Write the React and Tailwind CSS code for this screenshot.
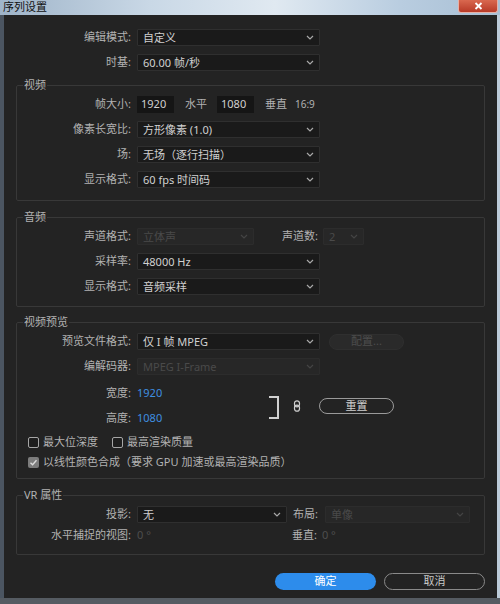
import React from "react";

const Chevron = ({ dim }) => (
  <svg width="8" height="5" viewBox="0 0 8 5" className="shrink-0">
    <path d="M1 1 L4 4 L7 1" fill="none" stroke={dim ? "#444" : "#a8a8a8"} strokeWidth="1.2" />
  </svg>
);

const Select = ({ value, w = "w-[183px]", disabled }) => (
  <div
    className={`${w} h-[17px] flex items-center justify-between pl-[5px] pr-[5px] border rounded-[1px] ${
      disabled ? "bg-[#272727] border-[#2c2c2c] text-[#4a4a4a]" : "bg-[#1a1a1a] border-[#2f2f2f] text-[#d0d0d0]"
    }`}
  >
    <span className="leading-none whitespace-nowrap">{value}</span>
    <Chevron dim={disabled} />
  </div>
);

const Row = ({ label, w = "w-[127px]", h = "h-[25px]", children }) => (
  <div className={`flex items-center ${h}`}>
    <span className={`${w} text-right text-[#b2b2b2] whitespace-nowrap`}>{label}</span>
    <div className="ml-[6px] flex items-center">{children}</div>
  </div>
);

const Group = ({ title, className = "", children }) => (
  <fieldset className={`mx-[12px] border border-[#383838] rounded-[2px] ${className}`}>
    <legend className="ml-[6px] px-[1px] leading-[14px] text-[#b2b2b2]">{title}</legend>
    {children}
  </fieldset>
);

const Box = ({ checked }) =>
  checked ? (
    <div className="w-[11px] h-[11px] rounded-[2px] bg-[#7c7c7c] flex items-center justify-center">
      <svg width="9" height="9" viewBox="0 0 9 9">
        <path d="M1.5 4.8 L3.6 6.8 L7.5 2.2" fill="none" stroke="#dcdcdc" strokeWidth="1.4" />
      </svg>
    </div>
  ) : (
    <div className="w-[11px] h-[11px] rounded-[2px] border border-[#a6a6a6] bg-[#1e1e1e]" />
  );

const LinkIcon = () => (
  <svg width="8" height="12" viewBox="0 0 8 12">
    <rect x="1.5" y="0.8" width="5" height="6" rx="2.5" fill="none" stroke="#d0d0d0" strokeWidth="1.2" />
    <rect x="1.5" y="5.2" width="5" height="6" rx="2.5" fill="none" stroke="#d0d0d0" strokeWidth="1.2" />
  </svg>
);

export default function App() {
  return (
    <div className="w-[500px] h-[604px] flex flex-col overflow-hidden text-[11px] font-['Noto_Sans','Noto_Sans_CJK_SC',sans-serif] bg-[#4b5561]">
      {/* title bar */}
      <div className="h-[15px] shrink-0 flex items-start justify-between bg-[linear-gradient(90deg,#9fb4c9,#c9d8e6_30%,#e0e9f1_55%,#b9cde0_80%,#a8bfd4)]">
        <span className="pl-[3px] leading-[14px] text-[#111]">序列设置</span>
        <div className="w-[40px] h-[13px] mr-[2px] rounded-b-[3px] border border-t-0 border-[#e6b0a6] bg-[linear-gradient(180deg,#d9684f,#b83a27)] flex items-center justify-center">
          <svg width="9" height="8" viewBox="0 0 9 8">
            <path d="M1.5 1 L7.5 7 M7.5 1 L1.5 7" stroke="#fff" strokeWidth="1.8" />
          </svg>
        </div>
      </div>

      <div className="flex-1 flex min-h-0">
        <div className="w-[4px] bg-[#4b5561]" />
        <div className="flex-1 bg-[#232323] flex flex-col pt-[10px]">
          <Row label="编辑模式:">
            <Select value="自定义" />
          </Row>
          <Row label="时基:">
            <Select value="60.00 帧/秒" />
          </Row>

          {/* video */}
          <Group title="视频" className="mt-[3px] pb-[8px]">
            <Row label="帧大小:" w="w-[114px]">
              <div className="w-[37px] h-[17px] bg-[#151515] text-[#d0d0d0] pl-[4px] flex items-center">1920</div>
              <span className="ml-[11px] text-[#b2b2b2]">水平</span>
              <div className="ml-[10px] w-[37px] h-[17px] bg-[#151515] text-[#d0d0d0] pl-[4px] flex items-center">1080</div>
              <span className="ml-[11px] text-[#b2b2b2]">垂直</span>
              <span className="ml-[8px] text-[#b2b2b2] text-[10px]">16:9</span>
            </Row>
            <Row label="像素长宽比:" w="w-[114px]">
              <Select value="方形像素 (1.0)" />
            </Row>
            <Row label="场:" w="w-[114px]">
              <Select value="无场（逐行扫描）" />
            </Row>
            <Row label="显示格式:" w="w-[114px]">
              <Select value="60 fps 时间码" />
            </Row>
          </Group>

          {/* audio */}
          <Group title="音频" className="mt-[9px] pb-[7px]">
            <Row label="声道格式:" w="w-[114px]">
              <Select value="立体声" w="w-[117px]" disabled />
              <span className="ml-[28px] text-[#b2b2b2]">声道数:</span>
              <div className="ml-[5px]">
                <Select value="2" w="w-[41px]" disabled />
              </div>
            </Row>
            <Row label="采样率:" w="w-[114px]">
              <Select value="48000 Hz" />
            </Row>
            <Row label="显示格式:" w="w-[114px]">
              <Select value="音频采样" />
            </Row>
          </Group>

          {/* preview */}
          <Group title="视频预览" className="mt-[8px] pb-[6px]">
            <Row label="预览文件格式:" w="w-[114px]">
              <Select value="仅 I 帧 MPEG" />
              <div className="ml-[9px] w-[75px] h-[16px] rounded-full bg-[#2a2a2a] border border-[#2f2f2f] text-[#4d4d4d] flex items-center justify-center">
                配置...
              </div>
            </Row>
            <Row label="编解码器:" w="w-[114px]">
              <Select value="MPEG I-Frame" disabled />
            </Row>
            <div className="flex items-center mt-[2px]">
              <div className="w-[252px]">
                <Row label="宽度:" w="w-[114px]">
                  <span className="text-[#3f8fe0]">1920</span>
                </Row>
                <Row label="高度:" w="w-[114px]">
                  <span className="text-[#3f8fe0]">1080</span>
                </Row>
              </div>
              <div className="w-[10px] h-[23px] mt-[3px] border-t-2 border-r-2 border-b-2 border-[#d0d0d0]" />
              <div className="ml-[14px]">
                <LinkIcon />
              </div>
              <div className="ml-[18px] w-[75px] h-[16px] rounded-full border border-[#9a9a9a] text-[#d0d0d0] flex items-center justify-center">
                重置
              </div>
            </div>
            <div className="flex items-center h-[20px] mt-[1px] pl-[11px] text-[#b2b2b2]">
              <Box />
              <span className="ml-[4px]">最大位深度</span>
              <div className="ml-[14px]">
                <Box />
              </div>
              <span className="ml-[4px]">最高渲染质量</span>
            </div>
            <div className="flex items-center h-[20px] pl-[11px] text-[#b2b2b2]">
              <Box checked />
              <span className="ml-[4px]">以线性颜色合成（要求 GPU 加速或最高渲染品质）</span>
            </div>
          </Group>

          {/* VR */}
          <Group title="VR 属性" className="mt-[9px] pb-[11px]">
            <Row label="投影:" w="w-[114px]">
              <Select value="无" w="w-[150px]" />
              <span className="ml-[6px] text-[#b2b2b2]">布局:</span>
              <div className="ml-[7px]">
                <Select value="单像" w="w-[145px]" disabled />
              </div>
            </Row>
            <Row label="水平捕捉的视图:" w="w-[114px]" h="h-[16px]">
              <span className="w-[155px] text-[#4e4e4e]">0 °</span>
              <span className="text-[#b2b2b2]">垂直:</span>
              <span className="ml-[5px] text-[#4e4e4e]">0 °</span>
            </Row>
          </Group>

          {/* buttons */}
          <div className="mt-[18px] flex justify-end pr-[12px] gap-[8px]">
            <div className="w-[101px] h-[17px] rounded-full bg-[#2d8ceb] text-white flex items-center justify-center">
              确定
            </div>
            <div className="w-[101px] h-[17px] rounded-full border border-[#8a8a8a] text-[#c8c8c8] flex items-center justify-center">
              取消
            </div>
          </div>
        </div>
        <div className="w-[3px] bg-[#bccbd9]" />
      </div>
      <div className="h-[6px] shrink-0 bg-[#555b62]" />
    </div>
  );
}
